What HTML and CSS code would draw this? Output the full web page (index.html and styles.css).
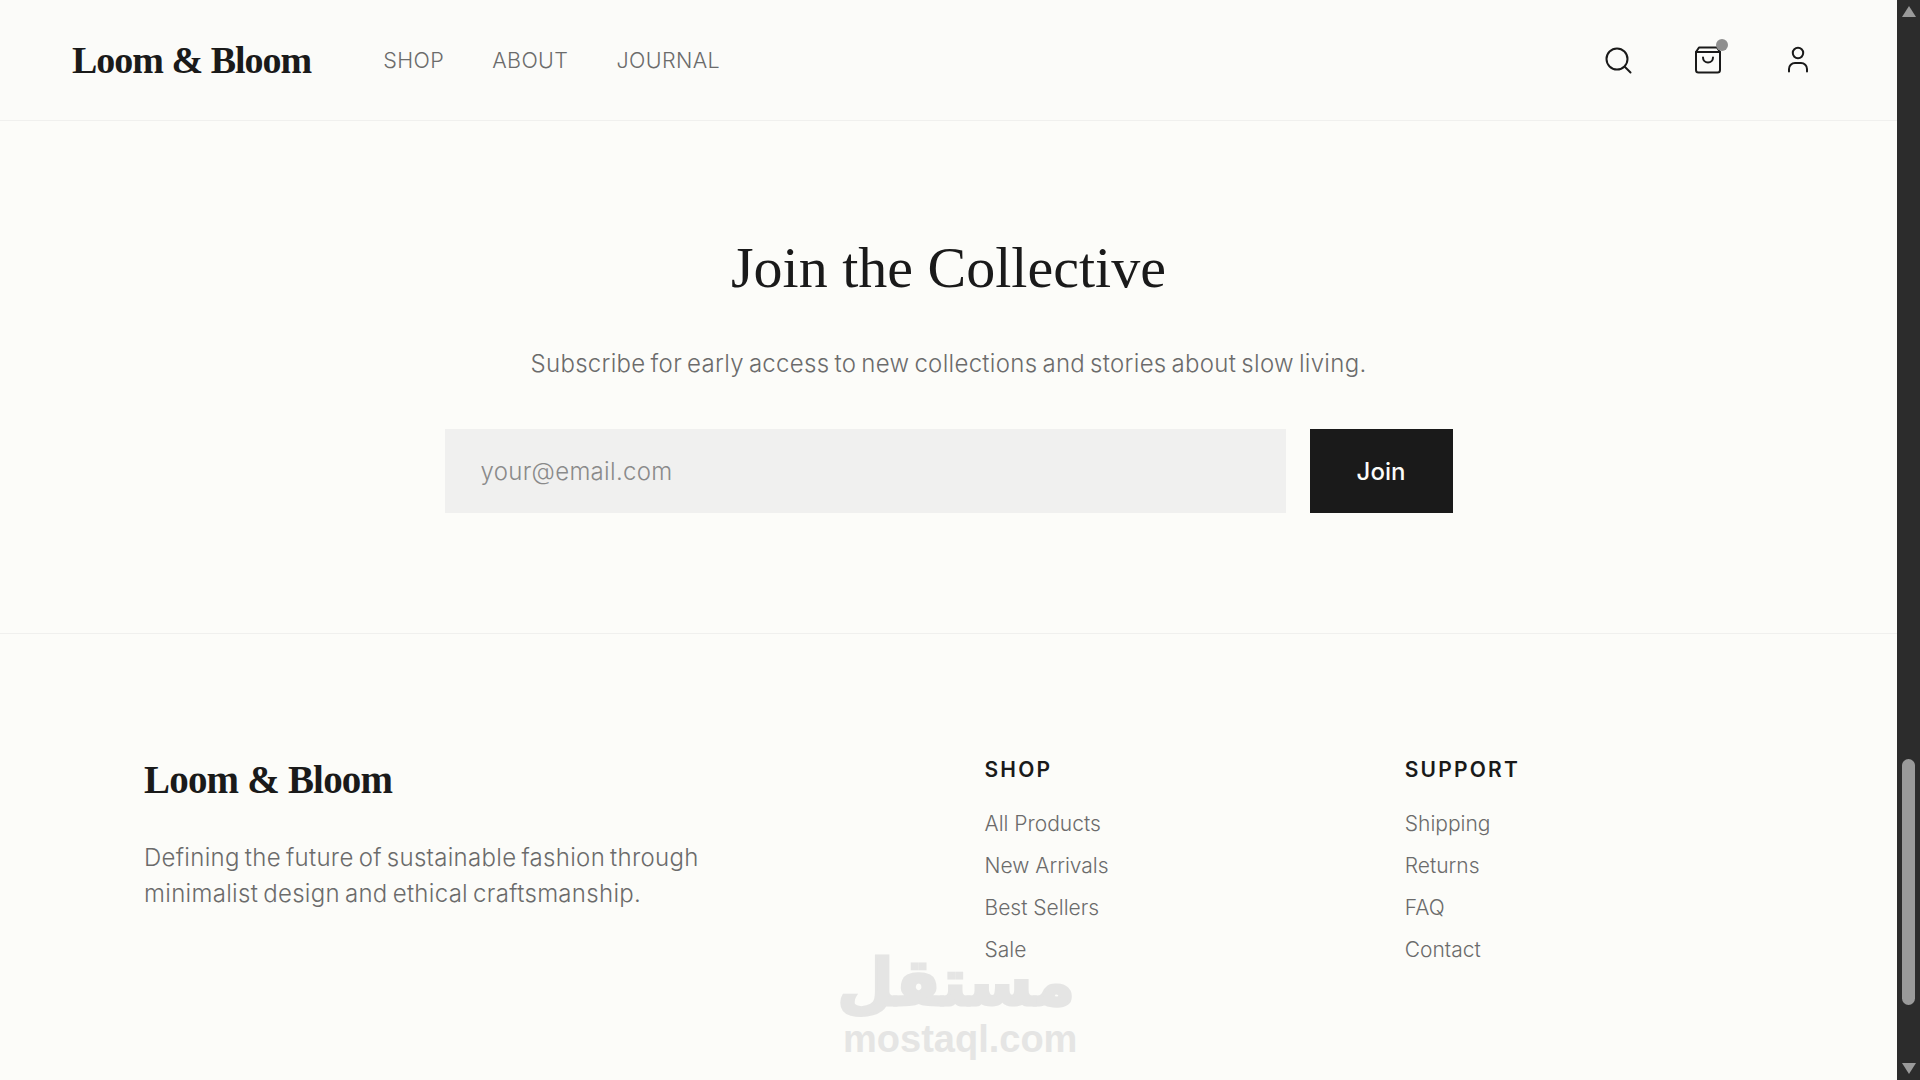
FILE: index.html
```html
<!DOCTYPE html>
<html lang="en">
<head>
  <meta charset="UTF-8" />
  <title>Loom &amp; Bloom</title>
  <link rel="stylesheet" href="styles.css">
</head>
<body>
  <div class="page">
    <header class="topbar">
      <div class="topbar-left">
        <a class="logo" href="#">Loom &amp; Bloom</a>
        <nav class="nav">
          <a href="#">SHOP</a>
          <a href="#">ABOUT</a>
          <a href="#">JOURNAL</a>
        </nav>
      </div>
      <div class="icons">
        <a class="icon" href="#">
          <svg width="30" height="30" viewBox="0 0 30 30" fill="none" stroke="#1a1a1a" stroke-width="2" stroke-linecap="round" stroke-linejoin="round"><circle cx="14" cy="14" r="10.5"/><path d="M22 22l5.5 5.5"/></svg>
        </a>
        <a class="icon bag" href="#">
          <svg width="30" height="30" viewBox="0 0 30 30" fill="none" stroke="#1a1a1a" stroke-width="2" stroke-linecap="round" stroke-linejoin="round"><path d="M6 2.5h18l3 4.5v18a2.5 2.5 0 0 1-2.5 2.5h-19A2.5 2.5 0 0 1 3 25V7z"/><path d="M3 7h24"/><path d="M10 12.5a5 5 0 0 0 10 0"/></svg>
          <span class="dot"></span>
        </a>
        <a class="icon" href="#">
          <svg width="30" height="30" viewBox="0 0 30 30" fill="none" stroke="#1a1a1a" stroke-width="2" stroke-linecap="round" stroke-linejoin="round"><circle cx="15" cy="8" r="5.2"/><path d="M6 26.5v-2.5a6 6 0 0 1 6-6h6a6 6 0 0 1 6 6v2.5"/></svg>
        </a>
      </div>
    </header>

    <section class="newsletter">
      <h2>Join the Collective</h2>
      <p>Subscribe for early access to new collections and stories about slow living.</p>
      <form class="signup">
        <input type="email" placeholder="your@email.com">
        <button type="button">Join</button>
      </form>
    </section>

    <footer class="footer">
      <div class="brand">
        <div class="footer-logo">Loom &amp; Bloom</div>
        <p>Defining the future of sustainable fashion through minimalist design and ethical craftsmanship.</p>
      </div>
      <div class="links">
        <h4>SHOP</h4>
        <a href="#">All Products</a>
        <a href="#">New Arrivals</a>
        <a href="#">Best Sellers</a>
        <a href="#">Sale</a>
      </div>
      <div class="links">
        <h4>SUPPORT</h4>
        <a href="#">Shipping</a>
        <a href="#">Returns</a>
        <a href="#">FAQ</a>
        <a href="#">Contact</a>
      </div>
    </footer>

    <div class="watermark">
      <div class="wm-ar" lang="ar" dir="rtl">مستقل</div>
      <div class="wm-en">mostaql.com</div>
    </div>
  </div>

  <div class="scrollbar">
    <span class="arrow up"></span>
    <div class="track"><div class="thumb"></div></div>
    <span class="arrow down"></span>
  </div>
</body>
</html>
```

FILE: styles.css
```css
* { margin: 0; padding: 0; box-sizing: border-box; }
html, body { height: 100%; overflow: hidden; }
body {
  display: flex;
  background: #fcfcf9;
  color: #1a1a1a;
  font-family: 'Inter', sans-serif;
  font-weight: 300;
}
a { color: inherit; text-decoration: none; }

.page {
  flex: 1;
  min-width: 0;
  position: relative;
}

/* top bar */
.topbar {
  height: 121px;
  padding: 0 72px;
  display: flex;
  align-items: center;
  justify-content: space-between;
  background: #fbfbf9;
  border-bottom: 1px solid #f0f0ee;
}
.topbar-left {
  display: flex;
  align-items: center;
  gap: 72px;
}
.logo {
  font-family: 'Liberation Serif', serif;
  font-size: 38px;
  font-weight: 700;
  letter-spacing: -1px;
}
.nav {
  display: flex;
  gap: 48px;
  font-size: 21.5px;
  letter-spacing: 0.4px;
  color: #6b6b6b;
}
.icons {
  display: flex;
  gap: 60px;
  margin-right: 12px;
}
.icon {
  display: block;
  width: 30px;
  height: 30px;
  position: relative;
}
.icon svg { display: block; }
.dot {
  position: absolute;
  top: -6px;
  right: -5px;
  width: 12px;
  height: 12px;
  border-radius: 50%;
  background: #8f8f8f;
}

/* newsletter */
.newsletter {
  height: 513px;
  padding-top: 108px;
  text-align: center;
  border-bottom: 1px solid #f0f0ee;
}
.newsletter h2 {
  font-family: 'Liberation Serif', serif;
  font-size: 58px;
  font-weight: 400;
  line-height: 78px;
}
.newsletter p {
  margin-top: 39px;
  font-size: 24px;
  line-height: 36px;
  letter-spacing: 0.3px;
  word-spacing: -2px;
  color: #6b6b6b;
}
.signup {
  width: 1008px;
  margin: 47px auto 0;
  display: flex;
  gap: 24px;
}
.signup input {
  flex: 1;
  height: 84px;
  padding: 0 36px;
  border: 0;
  background: #f0f0ef;
  font: inherit;
  font-size: 24px;
  letter-spacing: 0.3px;
}
.signup input::placeholder { color: #8a8a8a; }
.signup button {
  width: 143px;
  height: 84px;
  border: 0;
  background: #1a1a1a;
  color: #fcfcf9;
  font: inherit;
  font-size: 24px;
  font-weight: 500;
}

/* footer */
.footer {
  padding: 123px 144px 0;
  display: grid;
  grid-template-columns: repeat(4, 1fr);
  gap: 72px;
}
.brand { grid-column: span 2; }
.footer-logo {
  font-family: 'Liberation Serif', serif;
  font-size: 39px;
  font-weight: 700;
  line-height: 46px;
  letter-spacing: -0.8px;
}
.brand p {
  margin-top: 37px;
  max-width: 600px;
  font-size: 24px;
  line-height: 36px;
  letter-spacing: 0.3px;
  word-spacing: -2px;
  color: #6b6b6b;
}
.links {
  display: flex;
  flex-direction: column;
  align-items: flex-start;
  gap: 16px;
  font-size: 21px;
  line-height: 26px;
  color: #6b6b6b;
}
.links h4 {
  margin-bottom: 12px;
  font-size: 21px;
  font-weight: 600;
  letter-spacing: 2.2px;
  color: #1a1a1a;
}

/* watermark */
.watermark {
  position: absolute;
  left: 843px;
  top: 945px;
  width: 232px;
  text-align: center;
  color: #e5e5e4;
  pointer-events: none;
}
.wm-ar {
  font-family: 'DejaVu Sans', sans-serif;
  font-size: 65px;
  font-weight: 700;
  line-height: 76px;
  -webkit-text-stroke: 3px #e5e5e4;
}
.wm-en {
  font-family: 'Liberation Sans', sans-serif;
  font-size: 38px;
  font-weight: 700;
  line-height: 36px;
}

/* scrollbar */
.scrollbar {
  width: 23px;
  background: #2c2c2c;
  display: flex;
  flex-direction: column;
  align-items: center;
}
.arrow {
  width: 0;
  height: 0;
  margin: 6px 0;
  border-left: 7px solid transparent;
  border-right: 7px solid transparent;
}
.up { border-bottom: 11px solid #9a9a9a; }
.down { border-top: 11px solid #9a9a9a; }
.track {
  flex: 1;
  width: 13px;
}
.thumb {
  height: 246px;
  margin-top: 736px;
  border-radius: 7px;
  background: #9a9a9a;
}
```
